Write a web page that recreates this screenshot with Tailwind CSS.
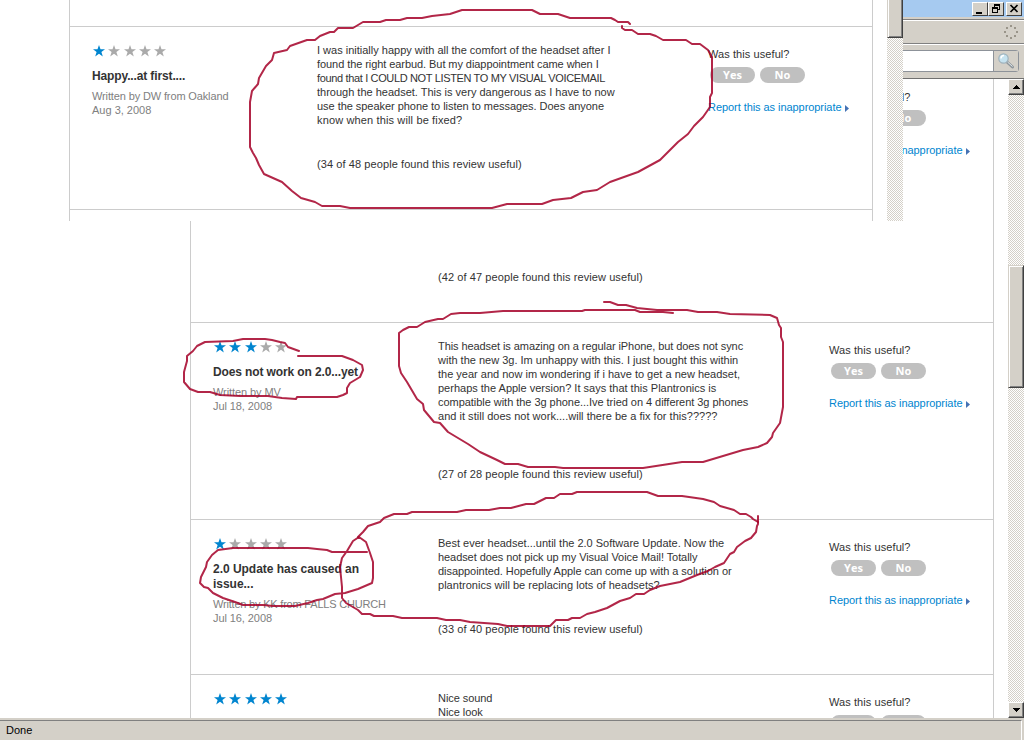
<!DOCTYPE html>
<html lang="en">
<head>
    <meta charset="UTF-8">
    <meta name="viewport" content="width=device-width, initial-scale=1.0">
    <title>Headset reviews</title>
    <script src="https://cdn.jsdelivr.net/npm/@tailwindcss/browser@4"></script>
</head>
<body class="relative w-[1024px] h-[740px] overflow-hidden bg-white font-['Liberation_Sans',Arial,sans-serif] text-[11px] leading-[14px] text-[#333]">

    <!-- Shared icons -->
    <svg class="hidden">
        <symbol id="star" viewBox="0 0 12 12">
            <path d="M6 0l1.5 4.2H12L8.4 6.9l1.4 4.5L6 8.7l-3.8 2.7 1.4-4.5L0 4.2h4.5z"/>
        </symbol>
    </svg>

    <!-- Browser window -->
    <div class="flex flex-col h-full">
        <div class="flex justify-end h-[19px] shrink-0 bg-[#a6caf0] border-b-2 border-[#d4d0c8] pt-[2px] pr-[2px]">
            <div class="flex w-4 h-[14px] bg-[#d4d0c8] border border-t-white border-l-white border-b-[#404040] border-r-[#404040]">
                <svg class="w-[14px] h-3" viewBox="0 0 14 12"><path d="M3 9h6v2H3z"/></svg>
            </div>
            <div class="flex w-4 h-[14px] bg-[#d4d0c8] border border-t-white border-l-white border-b-[#404040] border-r-[#404040]">
                <svg class="w-[14px] h-3" viewBox="0 0 14 12" shape-rendering="crispEdges"><path d="M5 1h6v6H9V6h1V3H6v1H5zM3 4h6v6H3zM4 6v3h4V6z" fill-rule="evenodd"/></svg>
            </div>
            <div class="flex w-4 h-[14px] ml-[2px] bg-[#d4d0c8] border border-t-white border-l-white border-b-[#404040] border-r-[#404040]">
                <svg class="w-[14px] h-3" viewBox="0 0 14 12"><path d="M3.500 2l7 7M10.500 2l-7 7" stroke="#000" stroke-width="1.700"/></svg>
            </div>
        </div>
        <div class="flex items-center justify-end h-[25px] shrink-0 bg-[#d4d0c8] border-y border-t-[#808080] border-b-[#808080] shadow-[inset_0_1px_#fff] pr-[6px]">
            <svg class="w-[14px] h-[14px]" viewBox="0 0 14 14" fill="#999489">
                <path d="M6 0h2v2H6zM6 12h2v2H6zM0 6h2v2H0zM12 6h2v2h-2zM2 2h2v2H2zM10 2h2v2h-2zM2 10h2v2H2zM10 10h2v2h-2z"/>
            </svg>
        </div>
        <div class="flex justify-end h-[35px] shrink-0 bg-[#d4d0c8] border-t border-t-white border-b border-b-[#707070] pt-[5px] pr-[5px]">
            <div class="flex w-[260px] h-[22px] bg-white border border-[#8d9299] rounded-r-[3px]">
                <div class="flex items-center justify-center w-[25px] ml-auto bg-[#d4d0c8] border-l border-[#8d9299]">
                    <svg class="w-[18px] h-[18px]" viewBox="0 0 18 18" fill="none">
                        <path d="M10 10l5.500 5" stroke="#8d959b" stroke-width="3" stroke-linecap="round"/>
                        <path d="M10.500 10l5 4.500" stroke="#e4eaec" stroke-width="1"/>
                        <circle cx="6.500" cy="6.500" r="4.700" fill="#c5e2ef" stroke="#9fb2bc" stroke-width="1.200"/>
                        <path d="M4 6.500A3 3 0 0 1 7 3.500" stroke="#fff" stroke-width="1.500"/>
                    </svg>
                </div>
            </div>
        </div>

        <div class="flex h-[639px] shrink-0 overflow-hidden">
            <!-- Review list -->
            <div class="w-[804px] h-[650px] ml-[190px] -mt-[9px] border-x border-[#ccc]">
                <div class="flex h-[253px] pt-4 border-b border-[#ccc]">
                    <div class="w-[225px] ml-[22px]"></div>
                    <div class="flex flex-col justify-end w-[391px] pb-[38px] whitespace-nowrap">
                        <p class="tracking-[0.085px]">(42 of 47 people found this review useful)</p>
                    </div>
                    <div class="pt-1 whitespace-nowrap">
                        <p class="tracking-[0.08px]">Was this useful?</p>
                        <div class="flex gap-[5px] mt-[6px] ml-[2px] text-white text-center font-bold leading-4 font-['Open_Sans',sans-serif]">
                            <span class="w-[45px] h-4 rounded-full bg-[#c0c0c0]">Yes</span>
                            <span class="w-[45px] h-4 rounded-full bg-[#c0c0c0]">No</span>
                        </div>
                        <p class="flex items-center mt-[17px] text-[#0085cf] tracking-[-0.06px]">Report this as inappropriate
                            <svg class="w-1 h-[7px] ml-1 mt-[3px]" viewBox="0 0 4 7" fill="#4472b4"><path d="M0 0l4 3.500L0 7z"/></svg></p>
                    </div>
                </div>

                <div class="flex h-[197px] pt-4 border-b border-[#ccc]">
                    <div class="w-[225px] pl-[22px] text-[#808080] whitespace-nowrap">
                        <div class="flex gap-[3.300px] h-3 mt-[2px] ml-px mb-3">
                            <svg class="w-3 h-3 fill-[#0085cf]"><use href="#star"/></svg>
                            <svg class="w-3 h-3 fill-[#0085cf]"><use href="#star"/></svg>
                            <svg class="w-3 h-3 fill-[#0085cf]"><use href="#star"/></svg>
                            <svg class="w-3 h-3 fill-[#aaa]"><use href="#star"/></svg>
                            <svg class="w-3 h-3 fill-[#aaa]"><use href="#star"/></svg>
                        </div>
                        <h2 class="mb-[5px] text-xs leading-[15px] font-bold text-[#333] tracking-[-0.12px]">Does not work on 2.0...yet</h2>
                        <p class="tracking-[-0.08px]">Written by MV</p>
                        <p class="tracking-[-0.08px]">Jul 18, 2008</p>
                    </div>
                    <div class="flex flex-col justify-between w-[391px] ml-[22px] pb-[38px] whitespace-nowrap">
                        <p><span class="tracking-[-0.08px]">This headset is amazing on a regular iPhone, but does not sync</span><br>
                            with the new 3g. Im unhappy with this. I just bought this within<br>
                            the year and now im wondering if i have to get a new headset,<br>
                            perhaps the Apple version? It says that this Plantronics is<br>
                            <span class="tracking-[-0.04px]">compatible with the 3g phone...Ive tried on 4 different 3g phones</span><br>
                            <span class="tracking-[0.02px]">and it still does not work....will there be a fix for this?????</span></p>
                        <p class="tracking-[0.085px]">(27 of 28 people found this review useful)</p>
                    </div>
                    <div class="pt-1 whitespace-nowrap">
                        <p class="tracking-[0.08px]">Was this useful?</p>
                        <div class="flex gap-[5px] mt-[6px] ml-[2px] text-white text-center font-bold leading-4 font-['Open_Sans',sans-serif]">
                            <span class="w-[45px] h-4 rounded-full bg-[#c0c0c0]">Yes</span>
                            <span class="w-[45px] h-4 rounded-full bg-[#c0c0c0]">No</span>
                        </div>
                        <p class="flex items-center mt-[17px] text-[#0085cf] tracking-[-0.06px]">Report this as inappropriate
                            <svg class="w-1 h-[7px] ml-1 mt-[3px]" viewBox="0 0 4 7" fill="#4472b4"><path d="M0 0l4 3.500L0 7z"/></svg></p>
                    </div>
                </div>

                <div class="flex h-[155px] pt-4 border-b border-[#ccc]">
                    <div class="w-[225px] pl-[22px] text-[#808080] whitespace-nowrap">
                        <div class="flex gap-[3.300px] h-3 mt-[2px] ml-px mb-3">
                            <svg class="w-3 h-3 fill-[#0085cf]"><use href="#star"/></svg>
                            <svg class="w-3 h-3 fill-[#aaa]"><use href="#star"/></svg>
                            <svg class="w-3 h-3 fill-[#aaa]"><use href="#star"/></svg>
                            <svg class="w-3 h-3 fill-[#aaa]"><use href="#star"/></svg>
                            <svg class="w-3 h-3 fill-[#aaa]"><use href="#star"/></svg>
                        </div>
                        <h2 class="mb-[5px] text-xs leading-[15px] font-bold text-[#333] tracking-[-0.03px]">2.0 Update has caused an<br>issue...</h2>
                        <p class="tracking-[-0.2px]">Written by KK from FALLS CHURCH</p>
                        <p class="tracking-[-0.08px]">Jul 16, 2008</p>
                    </div>
                    <div class="flex flex-col justify-between w-[391px] ml-[22px] pb-[38px] whitespace-nowrap">
                        <p>Best ever headset...until the 2.0 Software Update. Now the<br>
                            <span class="tracking-[-0.07px]">headset does not pick up my Visual Voice Mail! Totally</span><br>
                            <span class="tracking-[-0.05px]">disappointed. Hopefully Apple can come up with a solution or</span><br>
                            <span class="tracking-[0.02px]">plantronics will be replacing lots of headsets?</span></p>
                        <p class="tracking-[0.085px]">(33 of 40 people found this review useful)</p>
                    </div>
                    <div class="pt-1 whitespace-nowrap">
                        <p class="tracking-[0.08px]">Was this useful?</p>
                        <div class="flex gap-[5px] mt-[6px] ml-[2px] text-white text-center font-bold leading-4 font-['Open_Sans',sans-serif]">
                            <span class="w-[45px] h-4 rounded-full bg-[#c0c0c0]">Yes</span>
                            <span class="w-[45px] h-4 rounded-full bg-[#c0c0c0]">No</span>
                        </div>
                        <p class="flex items-center mt-[17px] text-[#0085cf] tracking-[-0.06px]">Report this as inappropriate
                            <svg class="w-1 h-[7px] ml-1 mt-[3px]" viewBox="0 0 4 7" fill="#4472b4"><path d="M0 0l4 3.500L0 7z"/></svg></p>
                    </div>
                </div>

                <div class="flex h-11 pt-4">
                    <div class="w-[225px] pl-[22px]">
                        <div class="flex gap-[3.300px] h-3 mt-[2px] ml-px">
                            <svg class="w-3 h-3 fill-[#0085cf]"><use href="#star"/></svg>
                            <svg class="w-3 h-3 fill-[#0085cf]"><use href="#star"/></svg>
                            <svg class="w-3 h-3 fill-[#0085cf]"><use href="#star"/></svg>
                            <svg class="w-3 h-3 fill-[#0085cf]"><use href="#star"/></svg>
                            <svg class="w-3 h-3 fill-[#0085cf]"><use href="#star"/></svg>
                        </div>
                    </div>
                    <p class="w-[391px] ml-[22px] tracking-[-0.06px]">Nice sound<br>Nice look</p>
                    <div class="pt-1 whitespace-nowrap">
                        <p class="tracking-[0.08px]">Was this useful?</p>
                        <div class="flex gap-[5px] mt-[6px] ml-[2px]">
                            <span class="w-[45px] h-4 rounded-full bg-[#c0c0c0]"></span>
                            <span class="w-[45px] h-4 rounded-full bg-[#c0c0c0]"></span>
                        </div>
                    </div>
                </div>
            </div>

            <!-- Page scrollbar -->
            <div class="flex flex-col w-4 ml-auto bg-[repeating-conic-gradient(#d4d0c8_0_25%,#fff_0_50%)] bg-[length:2px_2px]">
                <div class="flex items-center justify-center w-4 h-4 bg-[#d4d0c8] border border-t-white border-l-white border-b-[#404040] border-r-[#404040] shadow-[inset_-1px_-1px_#808080]">
                    <svg class="w-[7px] h-1" viewBox="0 0 7 4"><path d="M3 0h1v1h1v1h1v1h1v1H0V3h1V2h1V1h1z"/></svg>
                </div>
                <div class="w-4 h-[123px] mt-[170px] bg-[#d4d0c8] border border-t-[#d4d0c8] border-l-[#d4d0c8] border-b-[#404040] border-r-[#404040] shadow-[inset_1px_1px_#fff,inset_-1px_-1px_#808080]"></div>
                <div class="flex items-center justify-center w-4 h-4 mt-auto bg-[#d4d0c8] border border-t-white border-l-white border-b-[#404040] border-r-[#404040] shadow-[inset_-1px_-1px_#808080]">
                    <svg class="w-[7px] h-1" viewBox="0 0 7 4"><path d="M0 0h7v1H6v1H5v1H4v1H3V3H2V2H1V1H0z"/></svg>
                </div>
            </div>
        </div>

        <div class="flex-1 bg-[#d4d0c8] pt-[2px] pr-[2px]">
            <div class="h-full pt-[2px] pl-[6px] border-t border-r border-t-[#808080] border-r-white text-black">Done</div>
        </div>
    </div>

    <!-- Second window pasted over the first -->
    <div class="absolute top-0 left-0 flex w-[903px] h-[221px] bg-white overflow-hidden">
        <div class="w-[804px] ml-[69px] border-x border-[#ccc]">
            <div class="h-[27px] border-b border-[#ccc]"></div>
            <div class="flex h-[183px] pt-4 border-b border-[#ccc]">
                <div class="w-[225px] pl-[22px] text-[#808080] whitespace-nowrap">
                    <div class="flex gap-[3.300px] h-3 mt-[2px] ml-px mb-3">
                        <svg class="w-3 h-3 fill-[#0085cf]"><use href="#star"/></svg>
                        <svg class="w-3 h-3 fill-[#aaa]"><use href="#star"/></svg>
                        <svg class="w-3 h-3 fill-[#aaa]"><use href="#star"/></svg>
                        <svg class="w-3 h-3 fill-[#aaa]"><use href="#star"/></svg>
                        <svg class="w-3 h-3 fill-[#aaa]"><use href="#star"/></svg>
                    </div>
                    <h2 class="mb-[5px] text-xs leading-[15px] font-bold text-[#333] tracking-[-0.13px]">Happy...at first....</h2>
                    <p class="tracking-[-0.13px]">Written by DW from Oakland</p>
                    <p>Aug 3, 2008</p>
                </div>
                <div class="flex flex-col justify-between w-[391px] ml-[22px] pb-[38px] whitespace-nowrap">
                    <p>I was initially happy with all the comfort of the headset after I<br>
                        <span class="tracking-[-0.07px]">found the right earbud. But my diappointment came when I</span><br>
                        <span class="tracking-[-0.35px]">found that I COULD NOT LISTEN TO MY VISUAL VOICEMAIL</span><br>
                        through the headset. This is very dangerous as I have to now<br>
                        <span class="tracking-[-0.04px]">use the speaker phone to listen to messages. Does anyone</span><br>
                        <span class="tracking-[0.14px]">know when this will be fixed?</span></p>
                    <p class="tracking-[0.085px]">(34 of 48 people found this review useful)</p>
                </div>
                <div class="pt-1 whitespace-nowrap">
                    <p class="tracking-[0.08px]">Was this useful?</p>
                    <div class="flex gap-[5px] mt-[6px] ml-[2px] text-white text-center font-bold leading-4 font-['Open_Sans',sans-serif]">
                        <span class="w-[45px] h-4 rounded-full bg-[#c0c0c0]">Yes</span>
                        <span class="w-[45px] h-4 rounded-full bg-[#c0c0c0]">No</span>
                    </div>
                    <p class="flex items-center mt-[17px] text-[#0085cf] tracking-[-0.06px]">Report this as inappropriate
                        <svg class="w-1 h-[7px] ml-1 mt-[3px]" viewBox="0 0 4 7" fill="#4472b4"><path d="M0 0l4 3.500L0 7z"/></svg></p>
                </div>
            </div>
        </div>
        <div class="w-4 ml-auto bg-[repeating-conic-gradient(#d4d0c8_0_25%,#fff_0_50%)] bg-[length:2px_2px]">
            <div class="w-4 h-[38px] bg-[#d4d0c8] border border-t-0 border-l-[#d4d0c8] border-b-[#404040] border-r-[#404040] shadow-[inset_1px_0_#fff,inset_-1px_-1px_#808080]"></div>
        </div>
    </div>

    <!-- Red pen marks -->
    <svg class="absolute top-0 left-0 w-[1024px] h-[740px]" viewBox="0 0 1024 740" fill="none" stroke="#a50028" stroke-opacity=".85" stroke-width="2" stroke-linejoin="round" stroke-linecap="round">
        <polyline points="630,24 628,22 618,22 615,20 611,18 570,18 558,14 540,14 532,10 462,10 450,14 432,16 422,18 407,18 400,20 386,20 380,22 363,22 353,28 338,28 334,32 330,32 320,36 315,40 307,40 290,46 287,50 274,53 272,60 266,66 259,78 258,84 252,91 250,102 250,147 253,153 256,158 259,165 264,174 282,182 292,191 301,198 315,202 322,206 340,206 350,208 492,208 507,204 542,204 553,200 571,198 583,192 597,190 610,182 638,172 660,160 678,142 688,134 694,126 703,117 710,107 710,97 712,93 712,57 708,50 700,44 692,44 686,40 663,40 656,36 650,34 638,34 632,30 625,30 622,28 622,26"/>
        <polyline points="299,351 288,347 285,343 280,342 272,340 265,339 243,339 233,341 205,342 197,346 193,351 187,356 187,361 184,372 184,382 190,389 198,392 210,392 220,395 240,396 268,396 282,398 296,399 297,397 337,397 343,395 347,393 347,388 350,383 360,377 363,370 362,365 353,360 342,356 298,356"/>
        <polyline points="604,302 610,302 618,305 626,305 637,308 657,310 687,310 698,312 717,312 730,314 770,315 777,318 779,325 781,328 781,337 783,342 783,407 780,423 773,433 772,437 767,443 758,447 743,450 703,462 682,462 643,468 563,468 555,467 528,467 518,464 505,464 497,460 480,452 468,444 448,432 440,423 434,422 424,410 423,404 417,399 407,382 401,373 399,366 399,333 403,330 409,327 417,327 425,322 438,319 443,319 451,314 460,313 480,313 503,311 582,311 585,310 635,310 640,312 663,312 673,313"/>
        <polyline points="367,552 332,552 327,550 317,549 308,548 233,548 218,550 212,555 207,562 206,567 201,577 200,583 204,587 208,588 213,593 223,598 235,602 243,605 263,605 273,606 295,606 308,603 317,600 323,599 335,594 345,593 358,589 372,583 373,578 373,562 370,553 366,542 359,537 353,541 347,551 342,558 340,567 342,587 342,598 346,603 358,610 362,614 370,614 374,616 393,616 402,618 437,618 446,620 460,620 470,622 498,624 507,626 550,626 556,620 568,620 572,618 580,618 587,614 595,612 607,608 620,601 630,598 636,594 644,594 650,590 660,586 680,582 697,575 708,571 715,567 724,563 730,554 734,552 737,547 745,541 751,538 756,532 757,526 758,524 758,516"/>
        <polyline points="758,522 753,519 751,517 746,514 740,514 734,510 720,506 714,502 703,499 682,496 658,496 647,492 577,492 572,494 560,494 554,498 546,498 534,504 526,504 511,508 500,508 489,510 466,510 457,512 412,512 407,514 394,514 384,518 380,522 368,526 363,532 358,537"/>
    </svg>
</body>
</html>
